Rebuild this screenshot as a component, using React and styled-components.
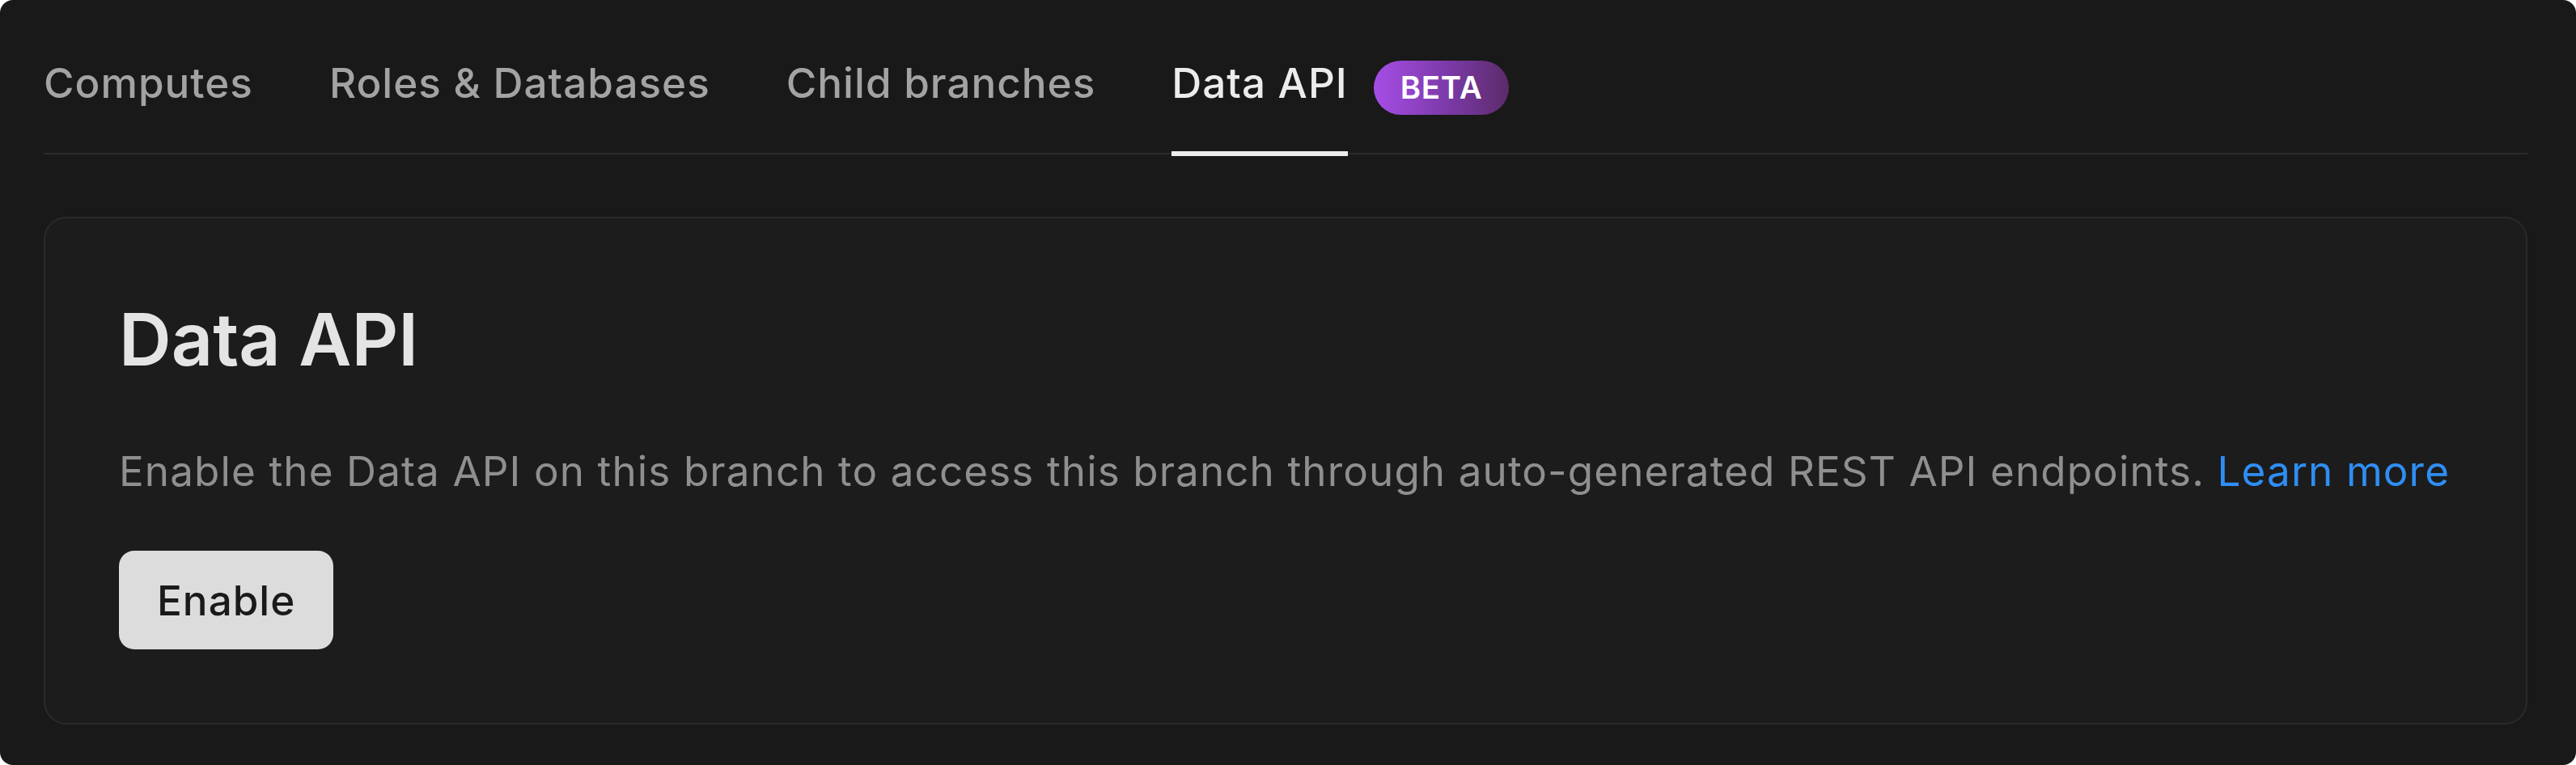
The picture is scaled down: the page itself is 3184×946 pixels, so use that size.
import styled, { createGlobalStyle } from "styled-components";

const GlobalStyle = createGlobalStyle`
  html, body {
    margin: 0;
    padding: 0;
    background: #ffffff;
  }
  * {
    box-sizing: border-box;
  }
`;

const tabs = [
  { title: "Computes" },
  { title: "Roles & Databases" },
  { title: "Child branches" },
  { title: "Data API", badge: "BETA", active: true },
];

const App = () => {
  return (
    <>
      <GlobalStyle />
      <Page>
        <TabBar>
          {tabs.map((tab) => (
            <TabItem key={tab.title}>
              <TabLabel $active={tab.active}>{tab.title}</TabLabel>
              {tab.badge && <Badge>{tab.badge}</Badge>}
            </TabItem>
          ))}
        </TabBar>
        <Card>
          <Title>Data API</Title>
          <Description>
            Enable the Data API on this branch to access this branch through
            auto-generated REST API endpoints. <Link href="#">Learn more</Link>
          </Description>
          <EnableButton>Enable</EnableButton>
        </Card>
      </Page>
    </>
  );
};

const Page = styled.div`
  display: flex;
  flex-direction: column;
  height: 946px;
  padding: 0 60px 50px 54px;
  background: #191919;
  border-radius: 16px;
  font-family: Inter, "Noto Sans", sans-serif;
`;

const TabBar = styled.div`
  display: flex;
  gap: 94px;
  border-bottom: 2px solid #2b2b2b;
`;

const TabItem = styled.div`
  display: flex;
  align-items: center;
  gap: 32px;
  height: 189px;
  padding: 71px 0 56px;
`;

const TabLabel = styled.span`
  position: relative;
  font-size: 51.2px;
  line-height: 62px;
  font-weight: 500;
  letter-spacing: 1px;
  color: ${(p) => (p.$active ? "#ececec" : "#a3a3a3")};

  &::after {
    content: "";
    display: ${(p) => (p.$active ? "block" : "none")};
    position: absolute;
    left: 0;
    right: 0;
    bottom: -60px;
    height: 6px;
    background: #ececec;
  }
`;

const Badge = styled.span`
  display: inline-flex;
  align-items: center;
  height: 67px;
  margin: -3px 0;
  padding: 0 33px;
  border-radius: 999px;
  background: linear-gradient(90deg, #a64de6 0%, #7b3aa8 55%, #5c2b6a 100%);
  color: #ffffff;
  font-size: 38.4px;
  font-weight: 600;
  letter-spacing: 0.8px;
  transform: translateY(6px);
`;

const Card = styled.div`
  display: flex;
  flex-direction: column;
  align-items: flex-start;
  margin-top: 77px;
  padding: 96px 91px 91px;
  background: #1c1c1c;
  border: 2px solid #2a2a2a;
  border-radius: 28px;
`;

const Title = styled.h2`
  margin: 0;
  font-size: 89.6px;
  line-height: 1.2;
  font-weight: 600;
  color: #e4e4e4;
`;

const Description = styled.p`
  margin: 70px 0 0;
  font-size: 51.2px;
  line-height: 1.5;
  letter-spacing: 1.1px;
  color: #8f8f8f;
`;

const Link = styled.a`
  color: #2f8ef3;
  text-decoration: none;
`;

const EnableButton = styled.button`
  display: inline-flex;
  align-items: center;
  height: 122px;
  margin-top: 61px;
  padding: 0 47px;
  border: none;
  border-radius: 19px;
  background: #dcdcdc;
  color: #1a1a1a;
  font-family: Inter, "Noto Sans", sans-serif;
  font-size: 51.2px;
  font-weight: 500;
  letter-spacing: 1px;
`;

export default App;
